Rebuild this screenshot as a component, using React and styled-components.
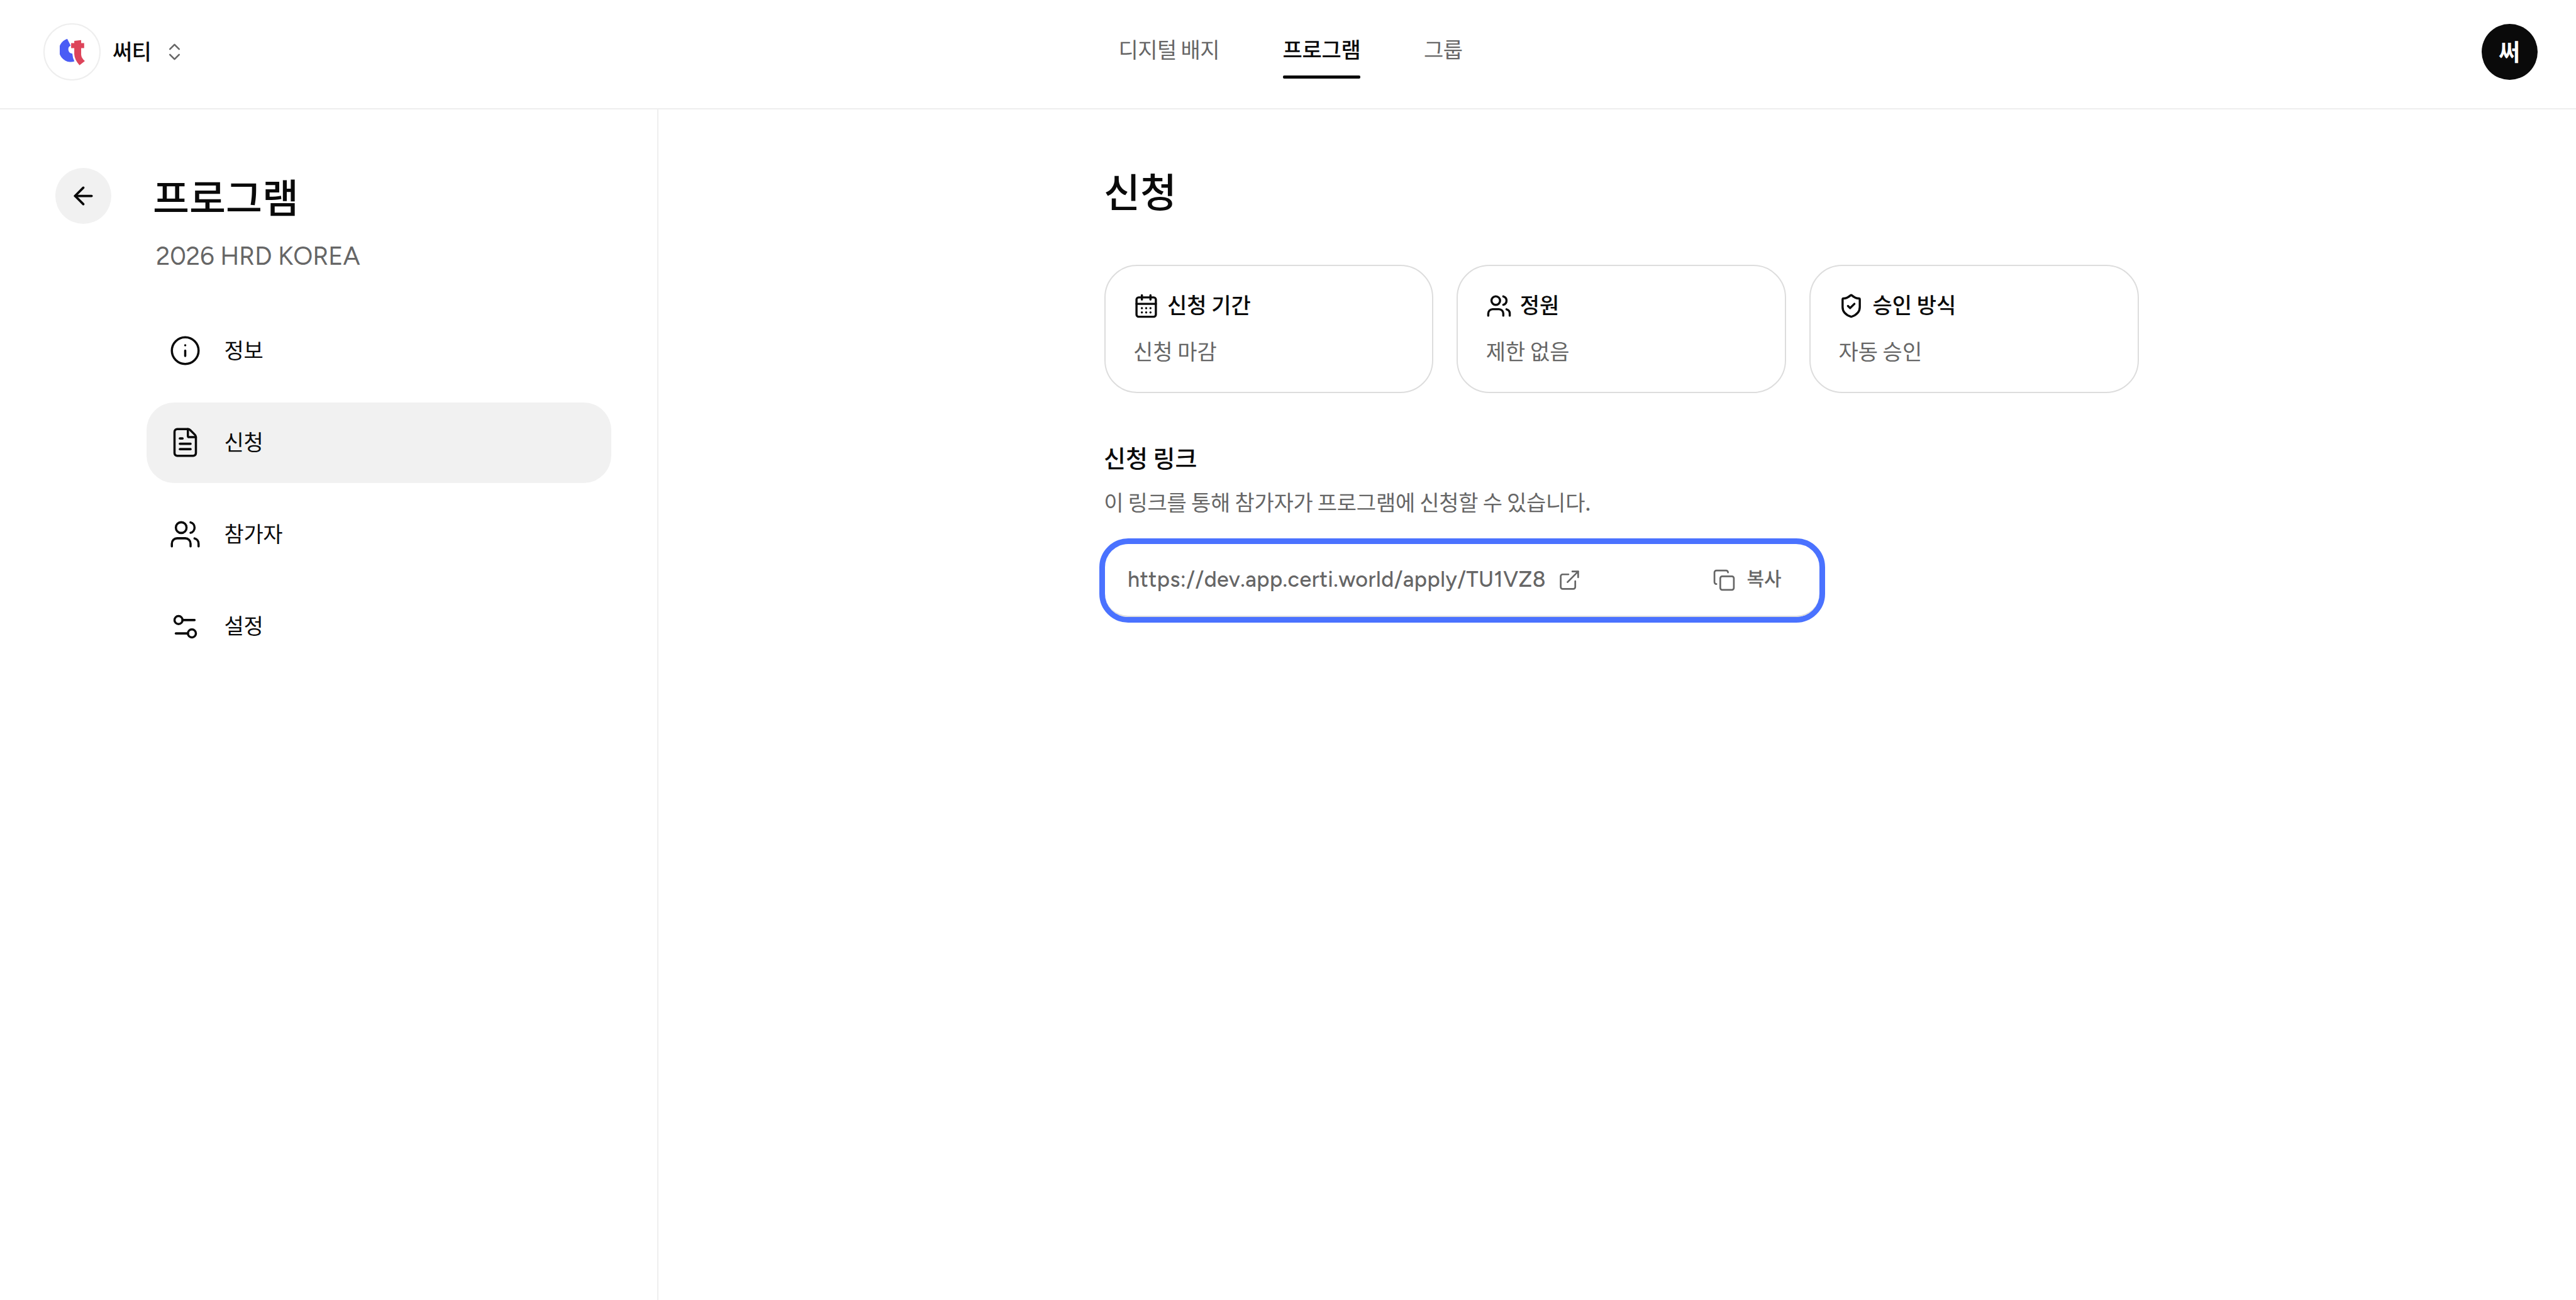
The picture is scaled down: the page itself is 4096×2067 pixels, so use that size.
import React from "react";
import styled, { createGlobalStyle } from "styled-components";
import {
  ArrowLeft,
  CalendarDays,
  ChevronsUpDown,
  Copy,
  ExternalLink,
  FileText,
  Info,
  Settings2,
  ShieldCheck,
  Users,
} from "lucide-react";

const tabs = [
  { name: "디지털 배지" },
  { name: "프로그램", active: true },
  { name: "그룹" },
];

const menuItems = [
  { name: "정보", icon: Info },
  { name: "신청", icon: FileText, active: true },
  { name: "참가자", icon: Users },
  { name: "설정", icon: Settings2 },
];

const cards = [
  { title: "신청 기간", value: "신청 마감", icon: CalendarDays },
  { title: "정원", value: "제한 없음", icon: Users },
  { title: "승인 방식", value: "자동 승인", icon: ShieldCheck },
];

const Logo = () => (
  <svg width="40" height="43" viewBox="0 0 168 179">
    <path
      d="M50 2 L73 48 A28 28 0 0 0 84 101 Q86 130 98 153 A79 79 0 0 1 50 2 Z"
      fill="#4a5cf5"
    />
    <path
      d="M97 16 L143 11 V31 H163 V64 H143 V108 Q145 132 168 150 L132 179 Q98 140 97 104 V64 H76 V31 H97 Z"
      fill="#dd445a"
    />
  </svg>
);

const App = () => {
  return (
    <Page>
      <GlobalStyle />
      <Header>
        <Workspace>
          <LogoCircle>
            <Logo />
          </LogoCircle>
          <WorkspaceName>써티</WorkspaceName>
          <ChevronsUpDown size={35} strokeWidth={1.75} color="#666" />
        </Workspace>
        <Tabs>
          {tabs.map((tab) => (
            <Tab key={tab.name} $active={tab.active}>
              {tab.name}
            </Tab>
          ))}
        </Tabs>
        <Avatar>써</Avatar>
      </Header>

      <Body>
        <Sidebar>
          <BackButton>
            <ArrowLeft size={45} strokeWidth={2} />
          </BackButton>
          <SidebarContent>
            <SidebarTitle>프로그램</SidebarTitle>
            <ProgramName>2026 HRD KOREA</ProgramName>
            <Menu>
              {menuItems.map(({ name, icon: Icon, active }) => (
                <MenuItem key={name} $active={active}>
                  <Icon size={51} strokeWidth={1.65} />
                  <span>{name}</span>
                </MenuItem>
              ))}
            </Menu>
          </SidebarContent>
        </Sidebar>

        <Main>
          <PageTitle>신청</PageTitle>
          <Cards>
            {cards.map(({ title, value, icon: Icon }) => (
              <Card key={title}>
                <CardTitle>
                  <Icon size={41} strokeWidth={2} />
                  <span>{title}</span>
                </CardTitle>
                <CardValue>{value}</CardValue>
              </Card>
            ))}
          </Cards>

          <SectionTitle>신청 링크</SectionTitle>
          <SectionText>
            이 링크를 통해 참가자가 프로그램에 신청할 수 있습니다.
          </SectionText>
          <LinkBox>
            <LinkInner>
              <LinkUrl>https://dev.app.certi.world/apply/TU1VZ8</LinkUrl>
              <ExternalLink size={37} strokeWidth={1.75} />
              <CopyButton>
                <Copy size={37} strokeWidth={1.75} />
                <span>복사</span>
              </CopyButton>
            </LinkInner>
          </LinkBox>
        </Main>
      </Body>
    </Page>
  );
};

const GlobalStyle = createGlobalStyle`
  * {
    box-sizing: border-box;
  }

  body {
    margin: 0;
    background: #fff;
    color: #0a0a0a;
    font-family: "Noto Sans CJK KR", sans-serif;
    font-size: 34px;
    line-height: 50px;
  }

  h1, h2, h3, p {
    margin: 0;
  }

  svg {
    flex-shrink: 0;
  }
`;

const Page = styled.div`
  display: flex;
  flex-direction: column;
  width: 4096px;
  height: 2067px;
  overflow: hidden;
`;

const Header = styled.header`
  display: grid;
  grid-template-columns: 1fr auto 1fr;
  height: 174px;
  padding: 37px 61px 0 69px;
  border-bottom: 2px solid #eee;
`;

const Workspace = styled.div`
  display: flex;
  align-items: center;
  height: 91px;
`;

const LogoCircle = styled.div`
  display: flex;
  align-items: center;
  justify-content: center;
  width: 91px;
  height: 91px;
  border: 2px solid #eee;
  border-radius: 50%;
`;

const WorkspaceName = styled.div`
  margin: 0 20px 0 19px;
  padding-bottom: 4px;
  font-weight: 500;
  letter-spacing: -0.8px;
`;

const Tabs = styled.nav`
  display: flex;
  gap: 100.6px;
  height: 88px;
`;

const Tab = styled.div`
  position: relative;
  height: 88px;
  padding-top: 15.5px;
  color: ${(props) => (props.$active ? "#0a0a0a" : "#666")};
  font-weight: ${(props) => (props.$active ? 500 : 400)};
  letter-spacing: ${(props) => (props.$active ? "-0.3px" : "-0.6px")};

  &::after {
    content: "";
    position: absolute;
    left: 0;
    right: 0;
    bottom: 0;
    height: 5px;
    border-radius: 2px;
    background: ${(props) => (props.$active ? "#0a0a0a" : "transparent")};
  }
`;

const Avatar = styled.div`
  display: flex;
  align-items: center;
  justify-content: center;
  justify-self: end;
  width: 89px;
  height: 89px;
  margin-top: 1px;
  padding: 0 1px 3px 0;
  border-radius: 50%;
  background: #0a0a0a;
  color: #fff;
  font-size: 37px;
  font-weight: 600;
`;

const Body = styled.div`
  display: flex;
  flex: 1;
`;

const Sidebar = styled.aside`
  display: flex;
  width: 1047px;
  padding: 93px 73px 0 88px;
  border-right: 2px solid #eee;
`;

const BackButton = styled.div`
  display: flex;
  align-items: center;
  justify-content: center;
  flex-shrink: 0;
  width: 89px;
  height: 89px;
  border-radius: 50%;
  background: #f1f1f1;
`;

const SidebarContent = styled.div`
  flex: 1;
  margin-left: 56px;
`;

const SidebarTitle = styled.h1`
  padding-left: 10px;
  font-size: 63px;
  font-weight: 500;
  line-height: 88px;
`;

const ProgramName = styled.p`
  padding: 22px 0 0 15px;
  color: #666;
  font-family: Figtree, Lato, sans-serif;
  font-size: 40px;
  letter-spacing: -0.15px;
  line-height: 60px;
`;

const Menu = styled.nav`
  display: flex;
  flex-direction: column;
  gap: 17.5px;
  margin-top: 56.5px;
`;

const MenuItem = styled.div`
  display: flex;
  align-items: center;
  gap: 36.5px;
  height: 128.6px;
  padding: 0 36px;
  border-radius: 44px;
  background: ${(props) => (props.$active ? "#f1f1f1" : "transparent")};
  letter-spacing: -0.4px;

  span {
    padding-bottom: 4px;
  }
`;

const Main = styled.main`
  width: 1645px;
  margin-left: 708.6px;
  padding-top: 82px;
`;

const PageTitle = styled.h2`
  margin-left: -0.6px;
  font-size: 63px;
  font-weight: 500;
  line-height: 92px;
`;

const Cards = styled.div`
  display: grid;
  grid-template-columns: repeat(3, 1fr);
  gap: 37px;
  margin-top: 73px;
`;

const Card = styled.div`
  height: 204px;
  padding: 37px 44.5px;
  border: 2px solid #ddd;
  border-radius: 52px;
`;

const CardTitle = styled.div`
  display: flex;
  align-items: center;
  gap: 13px;
  height: 52px;
  font-weight: 500;

  span {
    padding-bottom: 4px;
  }
`;

const CardValue = styled.p`
  margin-top: 21px;
  color: #666;
`;

const SectionTitle = styled.h3`
  margin: 73px 0 0 -0.6px;
  font-size: 38px;
  font-weight: 500;
  line-height: 57px;
`;

const SectionText = styled.p`
  margin: 17.5px 0 0 -0.4px;
  color: #666;
  letter-spacing: -0.26px;
`;

const LinkBox = styled.div`
  width: 1154px;
  height: 134px;
  margin: 33px 0 0 -7.5px;
  border: 9px solid #4a72ff;
  border-radius: 46px;
`;

const LinkInner = styled.div`
  display: flex;
  align-items: center;
  height: 100%;
  padding: 2px 60.5px 0 36px;
  border-bottom: 2px solid #ddd;
  border-radius: 37px;
  color: #666;
`;

const LinkUrl = styled.span`
  margin-right: 19px;
  padding-bottom: 2px;
  font-family: Figtree, Lato, sans-serif;
  font-weight: 500;
  letter-spacing: 0.5px;
`;

const CopyButton = styled.div`
  display: flex;
  align-items: center;
  gap: 17.5px;
  margin-left: auto;
  font-size: 30px;
  font-weight: 500;

  span {
    padding-bottom: 9px;
  }
`;

export default App;
